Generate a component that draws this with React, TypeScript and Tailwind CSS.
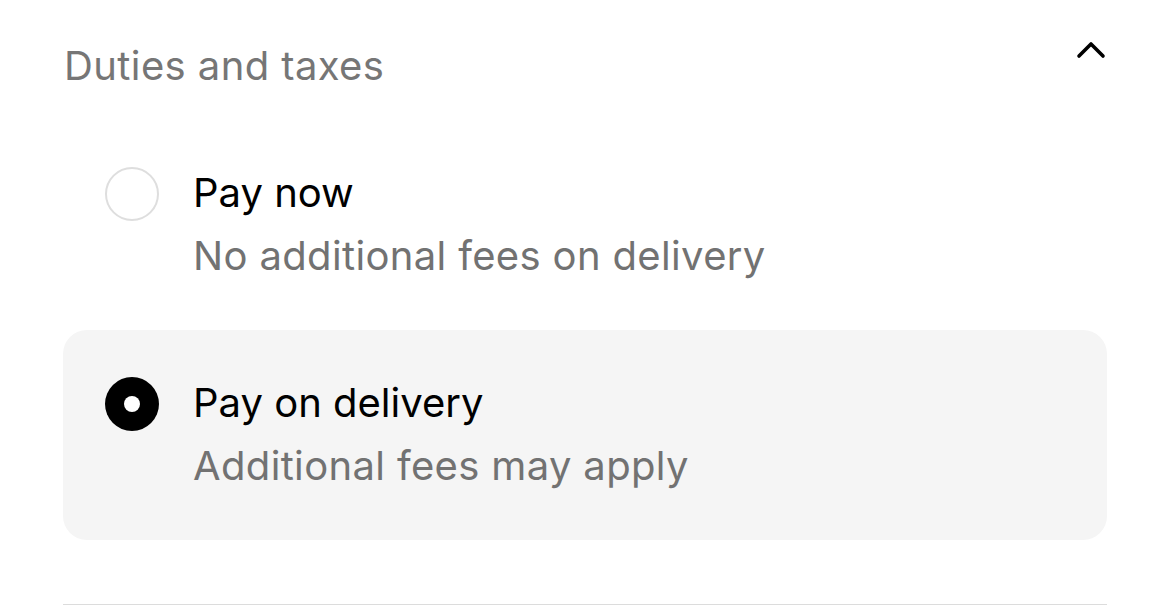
import React from "react";

function Option({ title, sub, selected }: { title: string; sub: string; selected?: boolean }) {
  return (
    <div
      className={`flex items-start gap-[34px] pl-[42px] pt-[42px] pb-[42px] rounded-[24px] ${
        selected ? "bg-[#f5f5f5]" : ""
      }`}
    >
      <div className="h-[63px] flex items-center">
        {selected ? (
          <div className="w-[54px] h-[54px] rounded-full bg-black flex items-center justify-center">
            <div className="w-[16px] h-[16px] rounded-full bg-white" />
          </div>
        ) : (
          <div className="w-[54px] h-[54px] rounded-full border-[2.5px] border-[#dedede] bg-white" />
        )}
      </div>
      <div className="flex flex-col">
        <div className="text-[40px] leading-[62px] text-black">{title}</div>
        <div className="text-[40px] leading-[64px] text-[#727272] tracking-[0.35px]">{sub}</div>
      </div>
    </div>
  );
}

export default function App() {
  return (
    <div
      className="w-[1170px] h-[605px] bg-white overflow-hidden"
      style={{ fontFamily: "Inter, 'Noto Sans', sans-serif" }}
    >
      <div className="ml-[63px] w-[1044px] flex flex-col">
        <div className="flex justify-between items-start pt-[34px] pl-[1px]">
          <div className="text-[40px] leading-[64px] text-[#767676] tracking-[0.4px]">Duties and taxes</div>
          <svg width="30" height="18" viewBox="0 0 30 18" className="mt-[7px] mr-[1px]" fill="none">
            <path d="M3 15 L15 3 L27 15" stroke="black" strokeWidth="3.6" strokeLinecap="round" strokeLinejoin="round" />
          </svg>
        </div>
        <div className="h-[22px]" />
        <Option title="Pay now" sub="No additional fees on delivery" />
        <Option title="Pay on delivery" sub="Additional fees may apply" selected />
        <div className="mt-[64px] h-[3px] bg-[#dcdcdc]" />
      </div>
    </div>
  );
}
